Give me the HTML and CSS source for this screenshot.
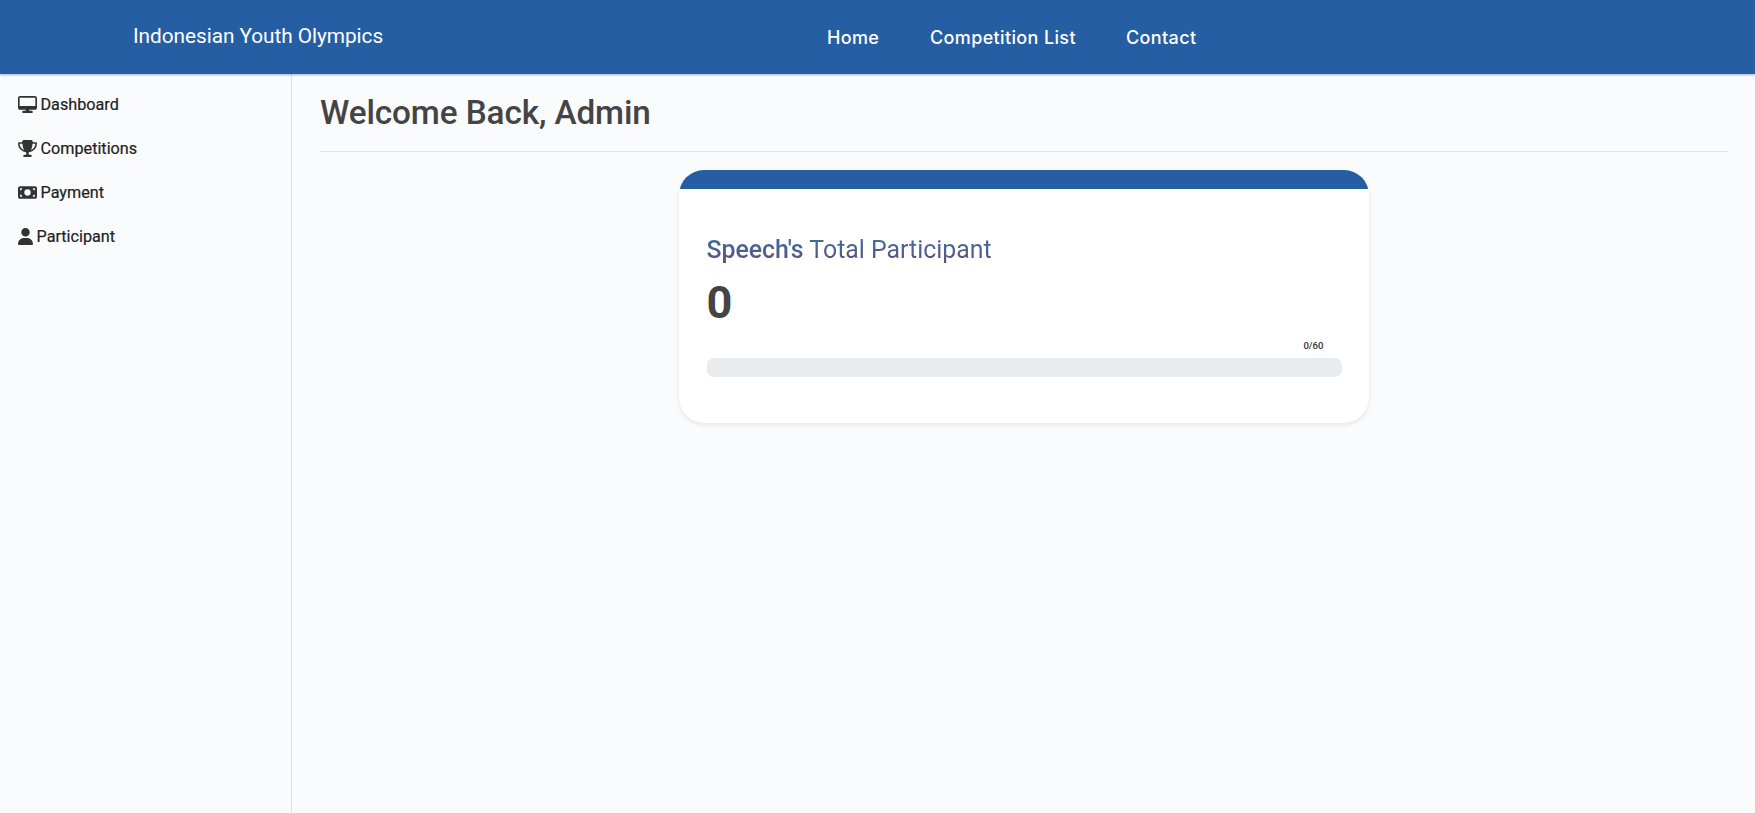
FILE: index.html
```html
<!DOCTYPE html>
<html lang="en">
<head>
<meta charset="utf-8">
<title>Indonesian Youth Olympics</title>
<link rel="stylesheet" href="styles.css">
</head>
<body>
<header class="topbar">
  <a class="brand">Indonesian Youth Olympics</a>
  <nav class="nav"><a class="nav-home">Home</a><a class="nav-list">Competition List</a><a class="nav-contact">Contact</a></nav>
</header>
<div class="layout">
  <aside class="sidebar">
    <a class="item"><svg width="19" height="17" viewBox="0 0 576 512"><path d="M64 0C28.700 0 0 28.700 0 64V352c0 35.300 28.700 64 64 64H240l-10.700 32H160c-17.700 0-32 14.300-32 32s14.300 32 32 32H416c17.700 0 32-14.300 32-32s-14.300-32-32-32H346.700L336 416H512c35.300 0 64-28.700 64-64V64c0-35.300-28.700-64-64-64H64zM526 50V300H50V50H526z"/></svg><span>Dashboard</span></a>
    <a class="item"><svg width="19" height="17" viewBox="0 0 576 512"><path d="M400 0H176c-26.500 0-48.100 21.800-47.100 48.200.2 5.300.4 10.600.7 15.800H24C10.700 64 0 74.700 0 88c0 92.600 33.500 157 78.500 200.700 44.300 43.100 98.300 64.800 138.100 75.800 23.400 6.500 39.400 26 39.400 45.600 0 20.900-17 37.900-37.900 37.900H192c-17.700 0-32 14.300-32 32s14.300 32 32 32H384c17.700 0 32-14.300 32-32s-14.300-32-32-32H357.900C337 448 320 431 320 410.100c0-19.600 15.900-39.200 39.400-45.600 39.900-11 93.900-32.700 138.200-75.800C542.500 245 576 180.600 576 88c0-13.300-10.700-24-24-24H446.400c.3-5.200.5-10.400.7-15.800C448.100 21.800 426.500 0 400 0zM48.900 112h84.400c9.100 90.100 29.200 150.300 51.900 190.600-24.900-11-50.800-26.500-73.200-48.300-32-31.100-58-76-63-142.300zM464.100 254.300c-22.400 21.800-48.300 37.300-73.200 48.300 22.700-40.300 42.800-100.500 51.900-190.600h84.400c-5.100 66.300-31.100 111.200-63 142.300z"/></svg><span>Competitions</span></a>
    <a class="item"><svg width="19" height="17" viewBox="0 0 576 512"><path fill-rule="evenodd" d="M64 64C28.700 64 0 92.700 0 128V384c0 35.300 28.700 64 64 64H512c35.300 0 64-28.700 64-64V128c0-35.300-28.700-64-64-64H64zM64 320c35.300 0 64 28.700 64 64H64V320zM64 192V128h64c0 35.300-28.700 64-64 64zM448 384c0-35.300 28.700-64 64-64v64H448zM512 192c-35.300 0-64-28.700-64-64h64v64zM288 160a96 96 0 1 1 0 192 96 96 0 1 1 0-192z"/></svg><span>Payment</span></a>
    <a class="item"><svg width="15" height="17" viewBox="0 0 448 512"><path d="M224 256A128 128 0 1 0 224 0a128 128 0 1 0 0 256zm-45.700 48C79.800 304 0 383.800 0 482.300 0 498.700 13.300 512 29.700 512H418.300c16.400 0 29.700-13.300 29.700-29.700C448 383.800 368.200 304 269.700 304H178.300z"/></svg><span>Participant</span></a>
  </aside>
  <main class="main">
    <h1 class="welcome">Welcome Back, Admin</h1>
    <section class="card">
      <div class="card-strip"></div>
      <div class="card-body">
        <h2 class="card-title"><b>Speech's</b> Total Participant</h2>
        <div class="count">0</div>
        <div class="ratio">0/60</div>
        <div class="progress"></div>
      </div>
    </section>
  </main>
</div>
</body>
</html>
```
FILE: styles.css
```css
* { box-sizing: border-box; }
body { margin: 0; height: 813px; display: flex; flex-direction: column; overflow: hidden; background: #f9fbfd; font-family: Roboto, sans-serif; color: #444; }
.topbar { height: 74px; flex: none; display: flex; background: #265ea4; color: #fff; padding-left: 133px; box-shadow: 0 1px 2px rgba(38, 94, 164, .45); z-index: 1; }
.brand { width: 694px; font-size: 20.8px; letter-spacing: -.05px; line-height: 72px; white-space: nowrap; }
.nav { display: flex; gap: 50px; font: 500 18px/76px Inter, sans-serif; letter-spacing: .36px; white-space: nowrap; }
.nav-home { width: 53px; }
.nav-list { width: 146px; }
.layout { flex: 1; display: flex; }
.sidebar { width: 292px; flex: none; border-right: 1px solid #dee2e6; padding: 8px 18px; }
.item { height: 44.2px; display: flex; align-items: center; gap: 3.5px; font-size: 16.2px; font-weight: 450; color: #222; -webkit-text-stroke: .2px #222; }
.item svg { fill: #333; }
.main { flex: 1; padding: 0 27px 0 28px; display: flex; flex-direction: column; align-items: center; }
.welcome { align-self: stretch; margin: 0 0 18px; height: 78px; border-bottom: 1px solid #e0e4e7; font-size: 33.3px; font-weight: 500; letter-spacing: -.11px; line-height: 78px; white-space: nowrap; }
.card { width: 690px; height: 253px; border-radius: 25px; overflow: hidden; background: #fff; box-shadow: 0 2px 4px rgba(0, 0, 0, .09); }
.card-strip { height: 19px; background: #265ea4; }
.card-body { padding: 43px 27.5px 0 27.5px; }
.card-title { margin: 0; width: max-content; font-size: 24.85px; font-weight: 400; line-height: 36px; background: linear-gradient(#3c71a6 10%, #604d76 90%); background-clip: text; -webkit-background-clip: text; color: transparent; }
.card-title b { font-weight: 500; }
.count { font-size: 45px; font-weight: 700; line-height: 54px; margin-top: 8px; }
.ratio { font-size: 9.6px; font-weight: 500; line-height: 12px; color: #333; text-align: right; padding-right: 18px; margin: 10px 0 6px; }
.progress { height: 19px; border-radius: 7px; background: #e8ecee; }
```
